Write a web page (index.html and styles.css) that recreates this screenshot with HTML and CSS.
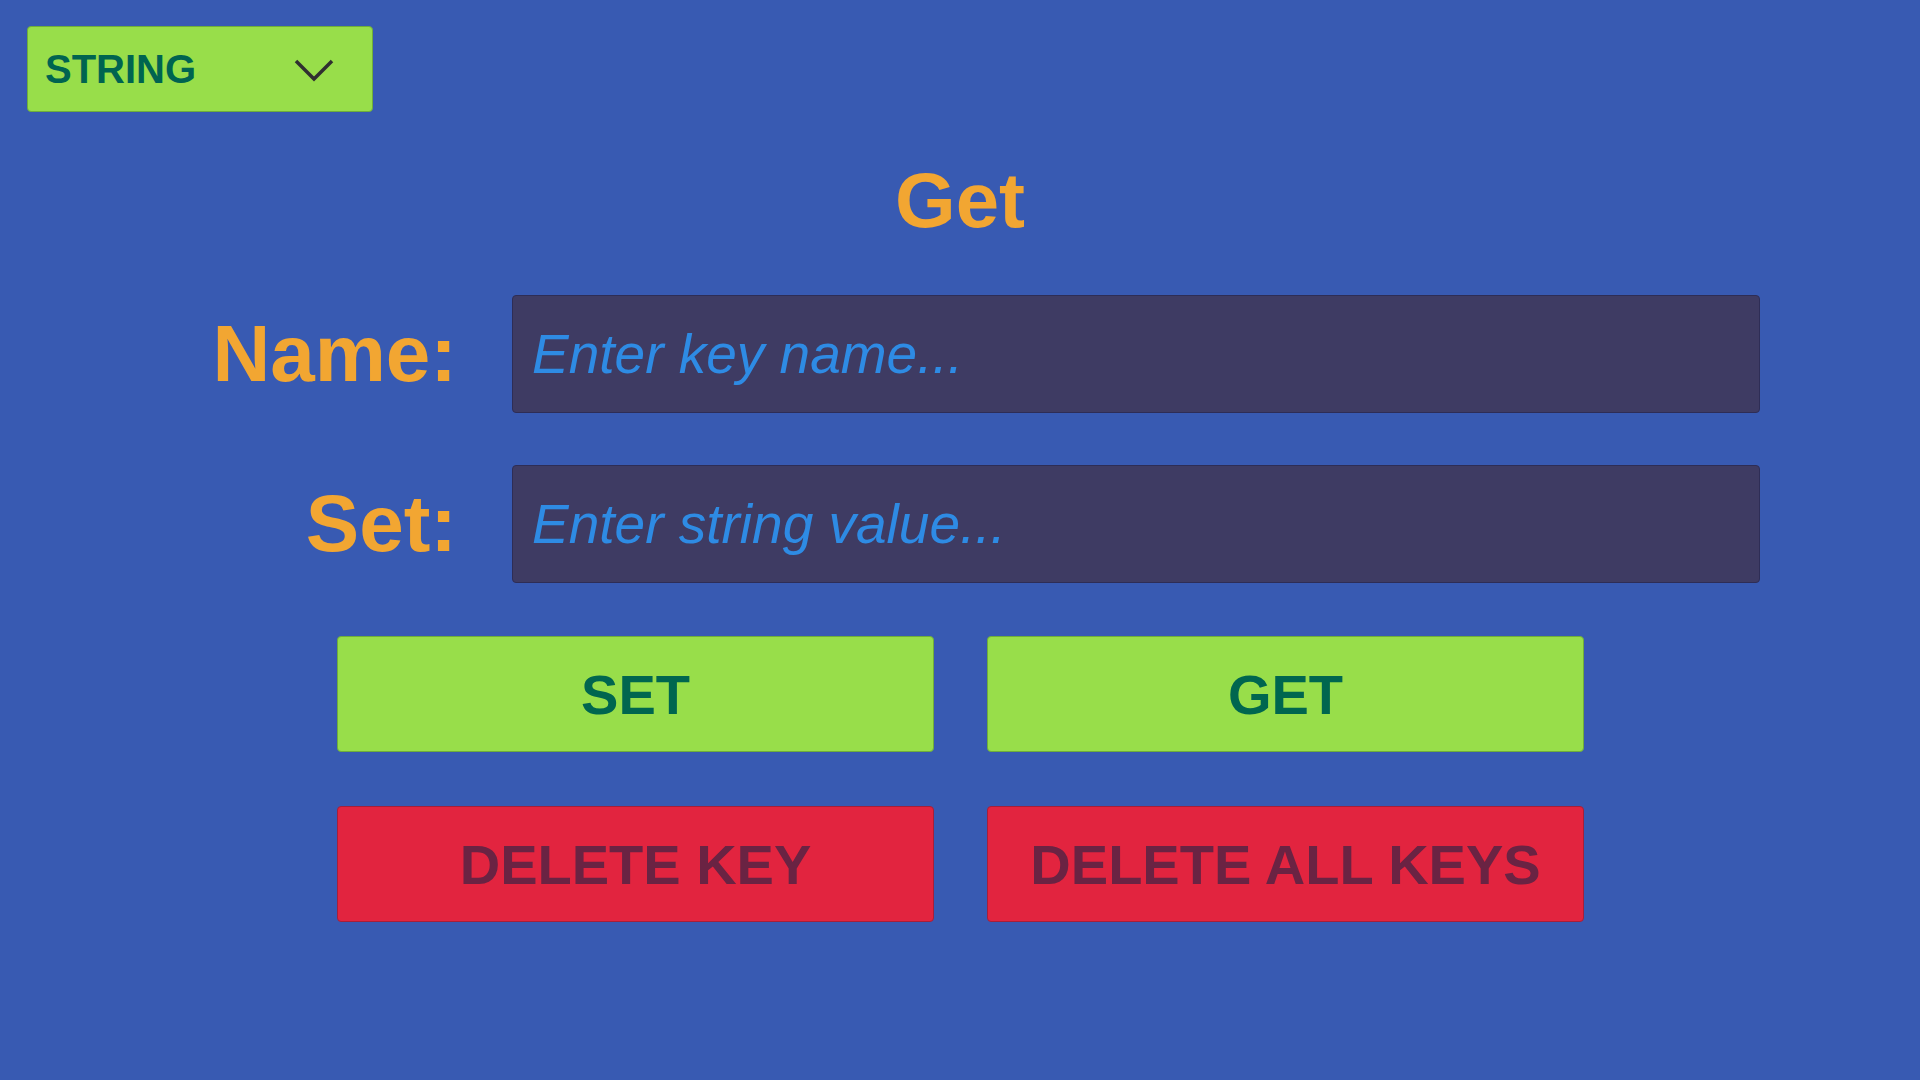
FILE: index.html
```html
<!DOCTYPE html>
<html>
<head>
<meta charset="utf-8">
<link rel="stylesheet" href="styles.css">
</head>
<body>
<div class="screen">
  <div class="dropdown">
    <span class="dropdown-label">STRING</span>
    <svg class="chevron" width="40" height="24" viewBox="0 0 40 24"><polyline points="2,3 20,21 38,3" fill="none" stroke="#303030" stroke-width="3.5"/></svg>
  </div>
  <div class="title">Get</div>
  <div class="form">
    <div class="row">
      <div class="label">Name:</div>
      <div class="input"><span class="placeholder">Enter key name...</span></div>
    </div>
    <div class="row">
      <div class="label">Set:</div>
      <div class="input"><span class="placeholder">Enter string value...</span></div>
    </div>
  </div>
  <div class="buttons">
    <div class="btn btn-green">SET</div>
    <div class="btn btn-green">GET</div>
    <div class="btn btn-red">DELETE KEY</div>
    <div class="btn btn-red">DELETE ALL KEYS</div>
  </div>
</div>
</body>
</html>
```
FILE: styles.css
```css
html, body {
  margin: 0;
  padding: 0;
  background: #385ab2;
}
.screen {
  width: 1920px;
  height: 1080px;
  background: #385ab2;
  font-family: "Liberation Sans", Arial, sans-serif;
  display: flex;
  flex-direction: column;
  padding-top: 26px;
  box-sizing: border-box;
}
.dropdown {
  margin-left: 27px;
  width: 346px;
  height: 86px;
  box-sizing: border-box;
  background: #98de4a;
  border: 1px solid #6fae3a;
  border-radius: 4px;
  display: flex;
  align-items: center;
  justify-content: space-between;
  padding: 0 38px 0 17px;
}
.dropdown-label {
  font-size: 40px;
  font-weight: bold;
  color: #006450;
  line-height: 86px;
}
.chevron {
  display: block;
  margin-top: 2px;
}
.title {
  margin-top: 49px;
  text-align: center;
  font-size: 78px;
  font-weight: bold;
  line-height: 78px;
  color: #f2a632;
}
.form {
  margin-top: 56px;
  display: flex;
  flex-direction: column;
  gap: 52px;
  padding-left: 153px;
}
.row {
  display: flex;
  gap: 55px;
  height: 118px;
}
.label {
  width: 304px;
  text-align: right;
  font-size: 80px;
  font-weight: bold;
  line-height: 118px;
  color: #f2a632;
}
.input {
  width: 1248px;
  height: 118px;
  box-sizing: border-box;
  background: #3e3b63;
  border: 1px solid #2e2d56;
  border-radius: 4px;
  padding-left: 19px;
  line-height: 116px;
}
.placeholder {
  font-size: 55px;
  font-style: italic;
  color: #2e8be4;
}
.buttons {
  margin-top: 53px;
  margin-left: 337px;
  display: grid;
  grid-template-columns: 597px 597px;
  column-gap: 53px;
  row-gap: 54px;
}
.btn {
  height: 116px;
  box-sizing: border-box;
  border-radius: 4px;
  display: flex;
  align-items: center;
  justify-content: center;
  font-size: 56px;
  font-weight: bold;
}
.btn-green {
  background: #98de4a;
  border: 1px solid #6fae3a;
  color: #00664f;
}
.btn-red {
  background: #e2243f;
  border: 1px solid #a51f3a;
  color: #6a2343;
}
```
